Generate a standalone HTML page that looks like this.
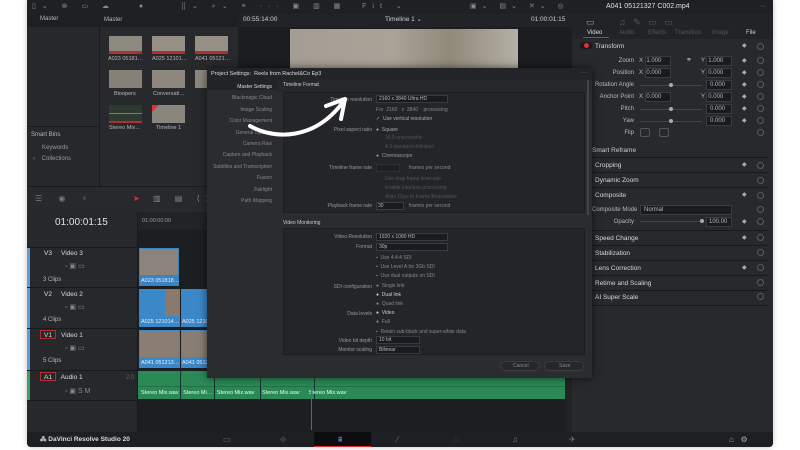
<!DOCTYPE html>
<html><head><meta charset="utf-8">
<style>
*{margin:0;padding:0;box-sizing:border-box}
body{width:800px;height:450px;background:#fff;position:relative;overflow:hidden;font-family:"Liberation Sans",sans-serif;color:#c9c9cc}
.a{position:absolute}
.t{position:absolute;white-space:nowrap;font-size:6px;color:#b8b8bc;line-height:7px}
.r{text-align:right}
.box{position:absolute;background:#1a1b1e;border:1px solid #3a3b40}
.sep{position:absolute;height:1px;background:#18191b}
.d{position:absolute;font-size:6px;color:#aaa;line-height:7px}
.rs{position:absolute;width:7px;height:7px;border:1px solid #5a5a60;border-radius:50%}
.lb{position:absolute;width:82px;left:290px;text-align:right;font-size:5px;color:#999;line-height:6px;white-space:nowrap}
</style></head><body>
<div class="a" style="left:27px;top:0;width:746px;height:447px;background:#28292e;border-radius:0 0 4px 4px;box-shadow:0 0 6px rgba(0,0,0,.25)"></div>
<!-- top toolbar -->
<div class="a" style="left:27px;top:0;width:545px;height:14px;background:#1f2024"></div>
<div class="t" style="left:32px;top:3px;font-size:7px;color:#8a8a90;letter-spacing:6px">▯⌄ ⊗ ▭ ☁ &nbsp;&nbsp;● &nbsp;&nbsp;&nbsp;⣿⌄ ⌕⌄ ≡ ··· ▣ ▥ ▦ &nbsp;Fit ⌄</div>
<div class="t" style="left:470px;top:3px;font-size:7px;color:#8a8a90;letter-spacing:5px">▣⌄ ▤⌄ ✕⌄ ◎ ··· ▣</div>
<!-- media pool -->
<div class="a" style="left:27px;top:14px;width:73px;height:172px;background:#27282c;border-right:1px solid #1a1b1e"></div>
<div class="a" style="left:27px;top:14px;width:73px;height:13px;background:#1e1f22"></div>
<div class="t" style="left:40px;top:16px;font-size:6px">Master</div>
<div class="a" style="left:27px;top:126px;width:73px;height:1px;background:#1a1b1e"></div>
<div class="t" style="left:31px;top:132px">Smart Bins</div>
<div class="t" style="left:42px;top:145px;color:#9a9aa0">Keywords</div>
<div class="t" style="left:33px;top:156px;color:#9a9aa0">›&nbsp;&nbsp;&nbsp; Collections</div>
<div class="a" style="left:100px;top:14px;width:138px;height:172px;background:#28292d"></div>
<div class="a" style="left:100px;top:14px;width:138px;height:13px;background:#1e1f22"></div>
<div class="t" style="left:104px;top:17px">Master</div>
<div class="a" style="left:109px;top:36px;width:33px;height:18px;background:#8d8880;border-bottom:3px solid #b03030"></div>
<div class="a" style="left:152px;top:36px;width:33px;height:18px;background:#958f86;border-bottom:3px solid #b03030"></div>
<div class="a" style="left:195px;top:36px;width:33px;height:18px;background:#968f85;border-bottom:3px solid #b03030"></div>
<div class="t" style="left:108px;top:56px;font-size:5.5px">A023 05181…</div>
<div class="t" style="left:152px;top:56px;font-size:5.5px">A025 12101…</div>
<div class="t" style="left:195px;top:56px;font-size:5.5px">A041 05121…</div>
<div class="a" style="left:109px;top:70px;width:33px;height:18px;background:#868079"></div>
<div class="a" style="left:152px;top:70px;width:33px;height:18px;background:#8d877e"></div>
<div class="a" style="left:195px;top:70px;width:12px;height:18px;background:#8d877e"></div>
<div class="t" style="left:114px;top:91px;font-size:5.5px">Bloopers</div>
<div class="t" style="left:153px;top:91px;font-size:5.5px">Conversati…</div>
<div class="a" style="left:109px;top:105px;width:33px;height:18px;background:#2e3a30;border-bottom:2px solid #b03030"></div>
<div class="a" style="left:109px;top:113px;width:33px;height:1px;background:#4a9a50"></div>
<div class="a" style="left:152px;top:105px;width:33px;height:18px;background:#8a857d"></div>
<div class="a" style="left:152px;top:105px;width:0;height:0;border-top:7px solid #d33;border-right:7px solid transparent"></div>
<div class="t" style="left:109px;top:125px;font-size:5.5px">Stereo Mix…</div>
<div class="t" style="left:156px;top:125px;font-size:5.5px">Timeline 1</div>
<!-- viewer -->
<div class="a" style="left:238px;top:14px;width:334px;height:172px;background:#1c1d20"></div>
<div class="a" style="left:238px;top:14px;width:334px;height:13px;background:#222327"></div>
<div class="t" style="left:243px;top:16px;font-size:6.5px;color:#d0d0d4">00:55:14:00</div>
<div class="t" style="left:385px;top:16px;font-size:6.5px;color:#d0d0d4">Timeline 1 ⌄</div>
<div class="t" style="left:531px;top:16px;font-size:6.5px;color:#d0d0d4">01:00:01:15</div>
<div class="a" style="left:290px;top:29px;width:228px;height:45px;background:linear-gradient(90deg,#a49d93,#aaa398 45%,#8f8a7a 70%,#b5afa5)"></div>
<!-- inspector -->
<div class="a" style="left:572px;top:0;width:201px;height:432px;background:#28292d"></div>
<div class="a" style="left:572px;top:0;width:201px;height:14px;background:#1f2024"></div>
<div class="t" style="left:606px;top:3px;font-size:7px;color:#e0e0e4">A041 05121327 C002.mp4</div>
<div class="t" style="left:759px;top:3px;font-size:7px;color:#888">···</div>
<div class="a" style="left:572px;top:14px;width:201px;height:25px;background:#222327"></div>
<div class="t" style="left:586px;top:17px;font-size:9px;color:#999;line-height:10px">▭</div>
<div class="t" style="left:587px;top:30px;font-size:6px;color:#ddd">Video</div>
<div class="a" style="left:583px;top:37px;width:26px;height:1px;background:#d03030"></div>
<div class="t" style="left:619px;top:30px;font-size:6px;color:#555">Audio</div>
<div class="t" style="left:648px;top:30px;font-size:6px;color:#555">Effects</div>
<div class="t" style="left:675px;top:30px;font-size:6px;color:#555">Transition</div>
<div class="t" style="left:712px;top:30px;font-size:6px;color:#555">Image</div>
<div class="t" style="left:746px;top:30px;font-size:6px;color:#ccc">File</div>
<div class="t" style="left:619px;top:17px;font-size:9px;color:#555;line-height:10px">♫ &nbsp;&nbsp;✎ &nbsp;&nbsp;▭ &nbsp;&nbsp;▭</div>
<div class="a" style="left:580px;top:42px;width:12px;height:7px;background:#1a1a1c;border-radius:4px"></div>
<div class="a" style="left:584px;top:43px;width:5px;height:5px;background:#e03030;border-radius:50%"></div>
<div class="t" style="left:595px;top:43px;font-size:6.5px;color:#d8d8dc">Transform</div>
<div class="t r" style="left:580px;width:54px;top:58px">Zoom</div>
<div class="t r" style="left:580px;width:54px;top:70px">Position</div>
<div class="t r" style="left:580px;width:54px;top:82px">Rotation Angle</div>
<div class="t r" style="left:580px;width:54px;top:94px">Anchor Point</div>
<div class="t r" style="left:580px;width:54px;top:106px">Pitch</div>
<div class="t r" style="left:580px;width:54px;top:118px">Yaw</div>
<div class="t r" style="left:580px;width:54px;top:130px">Flip</div>
<div class="box" style="left:645px;top:56px;width:26px;height:10px"></div><div class="t" style="left:639px;top:58px">X &nbsp;1.000</div>
<div class="box" style="left:706px;top:56px;width:26px;height:10px"></div><div class="t" style="left:701px;top:58px">Y &nbsp;1.000</div>
<div class="t" style="left:686px;top:57px;font-size:7px">⚭</div>
<div class="box" style="left:645px;top:68px;width:26px;height:10px"></div><div class="t" style="left:639px;top:70px">X &nbsp;0.000</div>
<div class="box" style="left:706px;top:68px;width:26px;height:10px"></div><div class="t" style="left:701px;top:70px">Y &nbsp;0.000</div>
<div class="a" style="left:640px;top:85px;width:62px;height:1px;background:#444"></div><div class="a" style="left:669px;top:83px;width:4px;height:4px;border-radius:50%;background:#aaa"></div>
<div class="box" style="left:706px;top:80px;width:26px;height:10px"></div><div class="t" style="left:710px;top:82px">0.000</div>
<div class="box" style="left:645px;top:92px;width:26px;height:10px"></div><div class="t" style="left:639px;top:94px">X &nbsp;0.000</div>
<div class="box" style="left:706px;top:92px;width:26px;height:10px"></div><div class="t" style="left:701px;top:94px">Y &nbsp;0.000</div>
<div class="a" style="left:640px;top:109px;width:62px;height:1px;background:#444"></div><div class="a" style="left:669px;top:107px;width:4px;height:4px;border-radius:50%;background:#aaa"></div>
<div class="box" style="left:706px;top:104px;width:26px;height:10px"></div><div class="t" style="left:710px;top:106px">0.000</div>
<div class="a" style="left:640px;top:121px;width:62px;height:1px;background:#444"></div><div class="a" style="left:669px;top:119px;width:4px;height:4px;border-radius:50%;background:#aaa"></div>
<div class="box" style="left:706px;top:116px;width:26px;height:10px"></div><div class="t" style="left:710px;top:118px">0.000</div>
<div class="a" style="left:640px;top:128px;width:10px;height:9px;border:1px solid #555;border-radius:2px"></div>
<div class="a" style="left:659px;top:128px;width:10px;height:9px;border:1px solid #555;border-radius:2px"></div>
<!-- diamonds and resets -->
<div class="d" style="left:742px;top:58px">◆</div><div class="d" style="left:742px;top:70px">◆</div><div class="d" style="left:742px;top:82px">◆</div><div class="d" style="left:742px;top:94px">◆</div><div class="d" style="left:742px;top:106px">◆</div><div class="d" style="left:742px;top:118px">◆</div>
<div class="d" style="left:742px;top:43px">◆</div>
<div class="rs" style="left:757px;top:43px"></div><div class="rs" style="left:757px;top:57px"></div><div class="rs" style="left:757px;top:69px"></div><div class="rs" style="left:757px;top:81px"></div><div class="rs" style="left:757px;top:93px"></div><div class="rs" style="left:757px;top:105px"></div><div class="rs" style="left:757px;top:117px"></div><div class="rs" style="left:757px;top:129px"></div>
<div class="t" style="left:592px;top:147px;font-size:6.5px;color:#ccc">Smart Reframe</div>
<div class="sep" style="left:592px;top:157px;width:176px"></div>
<div class="t" style="left:595px;top:162px;font-size:6.5px;color:#d8d8dc">Cropping</div>
<div class="sep" style="left:592px;top:172px;width:176px"></div>
<div class="t" style="left:595px;top:177px;font-size:6.5px;color:#d8d8dc">Dynamic Zoom</div>
<div class="sep" style="left:592px;top:187px;width:176px"></div>
<div class="t" style="left:595px;top:192px;font-size:6.5px;color:#d8d8dc">Composite</div>
<div class="t" style="left:592px;top:207px">Composite Mode</div>
<div class="box" style="left:640px;top:205px;width:92px;height:10px"></div><div class="t" style="left:644px;top:207px">Normal</div>
<div class="t r" style="left:590px;width:44px;top:219px">Opacity</div>
<div class="a" style="left:640px;top:221px;width:62px;height:1px;background:#444"></div><div class="a" style="left:700px;top:219px;width:4px;height:4px;border-radius:50%;background:#aaa"></div>
<div class="box" style="left:706px;top:217px;width:26px;height:10px"></div><div class="t" style="left:709px;top:219px">100.00</div>
<div class="sep" style="left:592px;top:230px;width:176px"></div>
<div class="t" style="left:595px;top:235px;font-size:6.5px;color:#d8d8dc">Speed Change</div>
<div class="sep" style="left:592px;top:245px;width:176px"></div>
<div class="t" style="left:595px;top:250px;font-size:6.5px;color:#d8d8dc">Stabilization</div>
<div class="sep" style="left:592px;top:260px;width:176px"></div>
<div class="t" style="left:595px;top:265px;font-size:6.5px;color:#d8d8dc">Lens Correction</div>
<div class="sep" style="left:592px;top:275px;width:176px"></div>
<div class="t" style="left:595px;top:280px;font-size:6.5px;color:#d8d8dc">Retime and Scaling</div>
<div class="sep" style="left:592px;top:290px;width:176px"></div>
<div class="t" style="left:595px;top:294px;font-size:6.5px;color:#d8d8dc">AI Super Scale</div>
<div class="sep" style="left:592px;top:305px;width:176px"></div>
<div class="d" style="left:742px;top:162px">◆</div><div class="d" style="left:742px;top:192px">◆</div><div class="d" style="left:742px;top:219px">◆</div><div class="d" style="left:742px;top:235px">◆</div><div class="d" style="left:742px;top:265px">◆</div>
<div class="rs" style="left:757px;top:162px"></div><div class="rs" style="left:757px;top:177px"></div><div class="rs" style="left:757px;top:192px"></div><div class="rs" style="left:757px;top:206px"></div><div class="rs" style="left:757px;top:218px"></div><div class="rs" style="left:757px;top:234px"></div><div class="rs" style="left:757px;top:249px"></div><div class="rs" style="left:757px;top:264px"></div><div class="rs" style="left:757px;top:279px"></div><div class="rs" style="left:757px;top:293px"></div>
<!-- timeline -->
<div class="a" style="left:27px;top:186px;width:545px;height:26px;background:#28292d;border-top:1px solid #1a1b1e"></div>
<div class="t" style="left:35px;top:194px;font-size:8px;line-height:9px;color:#777;letter-spacing:7px">☰ ◉ ♆</div>
<div class="t" style="left:133px;top:194px;font-size:8px;line-height:9px;color:#e03030">➤</div>
<div class="t" style="left:153px;top:194px;font-size:8px;line-height:9px;color:#888;letter-spacing:6px">▥ ▤ ⟨⟩</div>
<div class="a" style="left:27px;top:212px;width:111px;height:220px;background:#27282c;border-right:1px solid #1a1b1e"></div>
<div class="t" style="left:55px;top:217px;font-size:10px;line-height:11px;color:#e0e0e4">01:00:01:15</div>
<div class="a" style="left:138px;top:212px;width:427px;height:220px;background:#1d1e21"></div>
<div class="a" style="left:138px;top:212px;width:427px;height:18px;background:#222327"></div>
<div class="t" style="left:142px;top:218px;font-size:5.5px;color:#999">01:00:00:00</div>
<div class="a" style="left:27px;top:247px;width:3px;height:123px;background:#5aa0d8"></div>
<div class="a" style="left:27px;top:370px;width:3px;height:30px;background:#3ea060"></div>
<div class="sep" style="left:27px;top:247px;width:111px"></div>
<div class="t" style="left:44px;top:250px;font-size:6.5px;color:#ddd">V3&nbsp;&nbsp;&nbsp;&nbsp; Video 3</div>
<div class="t" style="left:65px;top:263px;font-size:7px;color:#888">▫ ▣ ▭</div>
<div class="t" style="left:43px;top:277px">3 Clips</div>
<div class="sep" style="left:27px;top:287px;width:111px"></div>
<div class="t" style="left:44px;top:291px;font-size:6.5px;color:#ddd">V2&nbsp;&nbsp;&nbsp;&nbsp; Video 2</div>
<div class="t" style="left:65px;top:304px;font-size:7px;color:#888">▫ ▣ ▭</div>
<div class="t" style="left:43px;top:317px">4 Clips</div>
<div class="sep" style="left:27px;top:328px;width:111px"></div>
<div class="a" style="left:40px;top:330px;width:16px;height:9px;border:1px solid #b03030"></div>
<div class="t" style="left:44px;top:332px;font-size:6.5px;color:#ddd">V1&nbsp;&nbsp;&nbsp;&nbsp; Video 1</div>
<div class="t" style="left:65px;top:345px;font-size:7px;color:#888">▫ ▣ ▭</div>
<div class="t" style="left:43px;top:358px">5 Clips</div>
<div class="sep" style="left:27px;top:370px;width:111px"></div>
<div class="a" style="left:40px;top:372px;width:16px;height:9px;border:1px solid #b03030"></div>
<div class="t" style="left:44px;top:374px;font-size:6.5px;color:#ddd">A1&nbsp;&nbsp;&nbsp;&nbsp; Audio 1</div>
<div class="t" style="left:126px;top:375px;color:#666">2.0</div>
<div class="t" style="left:65px;top:388px;font-size:7px;color:#888">▫ ▣ S M</div>
<div class="sep" style="left:27px;top:400px;width:111px"></div>
<div class="a" style="left:139px;top:248px;width:40px;height:38px;background:#3b82c0"></div>
<div class="a" style="left:140px;top:249px;width:38px;height:26px;background:#8a847c"></div>
<div class="t" style="left:141px;top:278px;color:#e8f0ff;font-size:5.5px">A023 051818…</div>
<div class="a" style="left:139px;top:289px;width:41px;height:38px;background:#3b88c8"></div>
<div class="a" style="left:165px;top:290px;width:14px;height:26px;background:#8a7a6e"></div>
<div class="a" style="left:181px;top:289px;width:26px;height:38px;background:#3b88c8"></div>
<div class="t" style="left:141px;top:319px;color:#e8f0ff;font-size:5.5px">A025 121014…&nbsp; A025 1210</div>
<div class="a" style="left:139px;top:330px;width:41px;height:38px;background:#3b88c8"></div>
<div class="a" style="left:140px;top:331px;width:39px;height:26px;background:#8a7e74"></div>
<div class="a" style="left:181px;top:330px;width:26px;height:38px;background:#3b88c8"></div>
<div class="a" style="left:182px;top:331px;width:25px;height:26px;background:#8a7e74"></div>
<div class="t" style="left:141px;top:360px;color:#e8f0ff;font-size:5.5px">A041 051213…&nbsp; A041 0512</div>
<div class="a" style="left:138px;top:371px;width:427px;height:28px;background:#2a8a56"></div>
<div class="a" style="left:138px;top:386px;width:427px;height:1px;background:#237048"></div>
<div class="a" style="left:180px;top:371px;width:1px;height:28px;background:#133"></div>
<div class="a" style="left:214px;top:371px;width:1px;height:28px;background:#133"></div>
<div class="a" style="left:260px;top:371px;width:1px;height:28px;background:#133"></div>
<div class="a" style="left:314px;top:371px;width:1px;height:28px;background:#133"></div>
<div class="t" style="left:141px;top:390px;color:#e8ffe8;font-size:5.5px">Stereo Mix.wav&nbsp;&nbsp; Stereo Mi…&nbsp;&nbsp; Stereo Mix.wav&nbsp;&nbsp;&nbsp;&nbsp; Stereo Mix.wav&nbsp;&nbsp;&nbsp;&nbsp;&nbsp; Stereo Mix.wav</div>
<div class="a" style="left:311px;top:372px;width:1px;height:58px;background:#e03030"></div>
<div class="a" style="left:565px;top:212px;width:7px;height:220px;background:#222327"></div>
<!-- bottom bar -->
<div class="a" style="left:27px;top:432px;width:746px;height:15px;background:#1e1f22;border-radius:0 0 4px 4px"></div>
<div class="t" style="left:40px;top:436px;font-size:6.5px;color:#ddd;font-weight:bold">⁂ DaVinci Resolve Studio 20</div>
<div class="a" style="left:314px;top:432px;width:57px;height:15px;background:#0d0d0f;border-bottom:1px solid #e03030"></div>
<div class="t" style="left:223px;top:435px;font-size:8px;line-height:9px;color:#777">▭</div>
<div class="t" style="left:280px;top:435px;font-size:8px;line-height:9px;color:#777">⟐</div>
<div class="t" style="left:338px;top:435px;font-size:8px;line-height:9px;color:#5aa0d8">⩩</div>
<div class="t" style="left:397px;top:435px;font-size:8px;line-height:9px;color:#777">⁄</div>
<div class="t" style="left:454px;top:435px;font-size:8px;line-height:9px;color:#777">◌</div>
<div class="t" style="left:512px;top:435px;font-size:8px;line-height:9px;color:#777">♫</div>
<div class="t" style="left:569px;top:435px;font-size:8px;line-height:9px;color:#777">✈</div>
<div class="t" style="left:729px;top:435px;font-size:8px;line-height:9px;color:#aaa">⌂ &nbsp;&nbsp;⚙</div>
<!-- dialog -->
<div class="a" style="left:207px;top:68px;width:385px;height:310px;background:#2b2c30;box-shadow:0 0 8px rgba(0,0,0,.6)"></div>
<div class="a" style="left:207px;top:68px;width:385px;height:12px;background:#232428"></div>
<div class="t" style="left:211px;top:71px;font-size:5.5px;color:#ddd">Project Settings: &nbsp;Reels from Rachel&amp;Co Ep3</div>
<div class="t" style="left:581px;top:70px;color:#888">···</div>
<div class="a" style="left:207px;top:80px;width:70px;height:10px;background:#222327"></div>
<div class="t r" style="left:207px;width:65px;top:82px;font-size:5px;line-height:11.4px;color:#888"><span style="color:#ddd">Master Settings</span><br>Blackmagic Cloud<br>Image Scaling<br>Color Management<br>General Options<br>Camera Raw<br>Capture and Playback<br>Subtitles and Transcription<br>Fusion<br>Fairlight<br>Path Mapping</div>
<div class="a" style="left:277px;top:80px;width:313px;height:12px;background:#27282c"></div>
<div class="t" style="left:283px;top:82px;font-size:5px;color:#ccc">Timeline Format</div>
<div class="a" style="left:283px;top:92px;width:302px;height:121px;background:#242529;border:1px solid #1c1d20"></div>
<div class="lb" style="top:97px">Timeline resolution</div>
<div class="lb" style="top:127px">Pixel aspect ratio</div>
<div class="lb" style="top:165px">Timeline frame rate</div>
<div class="lb" style="top:203px">Playback frame rate</div>
<div class="box" style="left:376px;top:95px;width:72px;height:8px"></div><div class="t" style="left:379px;top:96px;font-size:5px">2160 x 3840 Ultra HD</div>
<div class="t" style="left:376px;top:107px;font-size:5px;color:#888">For&nbsp; 2160&nbsp;&nbsp; x&nbsp; 3840&nbsp;&nbsp;&nbsp; processing</div>
<div class="t" style="left:376px;top:116px;font-size:5px;color:#aaa">✓&nbsp; Use vertical resolution</div>
<div class="t" style="left:376px;top:127px;font-size:5px;color:#aaa">●&nbsp; Square</div>
<div class="t" style="left:385px;top:135px;font-size:5px;color:#555">16:9 anamorphic</div>
<div class="t" style="left:385px;top:144px;font-size:5px;color:#555">4:3 standard definition</div>
<div class="t" style="left:376px;top:153px;font-size:5px;color:#999">●&nbsp; Cinemascope</div>
<div class="box" style="left:376px;top:164px;width:24px;height:8px;opacity:.5"></div>
<div class="t" style="left:409px;top:165px;font-size:5px;color:#888">frames per second</div>
<div class="t" style="left:385px;top:175px;font-size:5px;color:#555;line-height:9px">Use drop frame timecode<br>Enable interlace processing<br>Align Clips to Frame Boundaries</div>
<div class="box" style="left:376px;top:202px;width:28px;height:8px"></div>
<div class="t" style="left:378px;top:203px;font-size:5px">30</div>
<div class="t" style="left:409px;top:203px;font-size:5px;color:#888">frames per second</div>
<div class="t" style="left:283px;top:220px;font-size:5px;color:#ccc">Video Monitoring</div>
<div class="a" style="left:283px;top:228px;width:302px;height:127px;background:#242529;border:1px solid #1c1d20"></div>
<div class="lb" style="top:234px">Video Resolution</div>
<div class="lb" style="top:244px">Format</div>
<div class="lb" style="top:284px">SDI configuration</div>
<div class="lb" style="top:311px">Data levels</div>
<div class="lb" style="top:338px">Video bit depth</div>
<div class="lb" style="top:347px">Monitor scaling</div>
<div class="box" style="left:376px;top:233px;width:72px;height:8px"></div><div class="t" style="left:379px;top:234px;font-size:5px">1920 x 1080 HD</div>
<div class="box" style="left:376px;top:243px;width:72px;height:8px"></div><div class="t" style="left:379px;top:244px;font-size:5px">30p</div>
<div class="t" style="left:376px;top:254px;font-size:5px;color:#888;line-height:9.2px">▪&nbsp; Use 4:4:4 SDI<br>▪&nbsp; Use Level A for 3Gb SDI<br>▪&nbsp; Use dual outputs on SDI<br>●&nbsp; Single link<br><span style="color:#ccc">●&nbsp; Dual link</span><br>●&nbsp; Quad link<br><span style="color:#ccc">●&nbsp; Video</span><br>●&nbsp; Full<br>▪&nbsp; Retain sub-black and super-white data</div>
<div class="box" style="left:376px;top:336px;width:44px;height:8px"></div><div class="t" style="left:379px;top:337px;font-size:5px">10 bit</div>
<div class="box" style="left:376px;top:346px;width:44px;height:8px"></div><div class="t" style="left:379px;top:347px;font-size:5px">Bilinear</div>
<div class="a" style="left:587px;top:80px;width:2px;height:135px;background:#444"></div>
<div class="a" style="left:500px;top:361px;width:40px;height:10px;border:1px solid #3c3d42;border-radius:5px;background:#26272b"></div>
<div class="t" style="left:513px;top:363px;font-size:5px;color:#888">Cancel</div>
<div class="a" style="left:544px;top:361px;width:40px;height:10px;border:1px solid #3c3d42;border-radius:5px;background:#26272b"></div>
<div class="t" style="left:559px;top:363px;font-size:5px;color:#888">Save</div>
<svg class="a" style="left:0;top:0" width="800" height="450"><path d="M250 126 C275 140 315 140 343 102" fill="none" stroke="#fff" stroke-width="4" stroke-linecap="round"/><path d="M326 106 L345 99 L341 119" fill="none" stroke="#fff" stroke-width="4" stroke-linecap="round" stroke-linejoin="round"/></svg>
</body></html>
